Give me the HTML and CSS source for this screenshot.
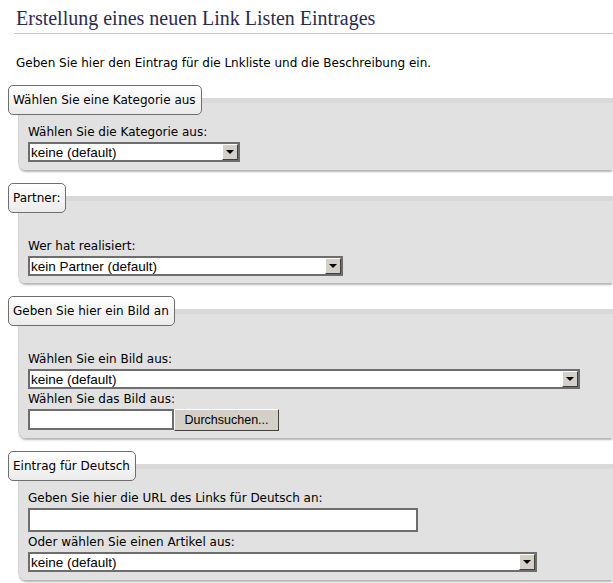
FILE: index.html
```html
<!DOCTYPE html>
<html lang="de">
<head>
    <meta charset="UTF-8">
    <title>Erstellung eines neuen Link Listen Eintrages</title>
    <link rel="stylesheet" href="styles.css">
</head>
<body>
    <div class="page">
        <h1 class="title">Erstellung eines neuen Link Listen Eintrages</h1>
        <p class="intro">Geben Sie hier den Eintrag für die Lnkliste und die Beschreibung ein.</p>

        <div class="group">
            <div class="legend">Wählen Sie eine Kategorie aus</div>
            <div class="panel">
                <label class="field-label">Wählen Sie die Kategorie aus:</label>
                <span class="combo combo-cat">
                    <select><option>keine (default)</option></select>
                    <span class="drop"></span>
                </span>
            </div>
        </div>

        <div class="group">
            <div class="legend">Partner:</div>
            <div class="panel panel-spaced">
                <label class="field-label">Wer hat realisiert:</label>
                <span class="combo combo-partner">
                    <select><option>kein Partner (default)</option></select>
                    <span class="drop"></span>
                </span>
            </div>
        </div>

        <div class="group">
            <div class="legend">Geben Sie hier ein Bild an</div>
            <div class="panel panel-spaced">
                <label class="field-label">Wählen Sie ein Bild aus:</label>
                <span class="combo combo-bild">
                    <select><option>keine (default)</option></select>
                    <span class="drop"></span>
                </span>
                <label class="field-label">Wählen Sie das Bild aus:</label>
                <div class="file-row">
                    <input type="text" class="file-name">
                    <button class="file-btn">Durchsuchen...</button>
                </div>
            </div>
        </div>

        <div class="group">
            <div class="legend">Eintrag für Deutsch</div>
            <div class="panel">
                <label class="field-label">Geben Sie hier die URL des Links für Deutsch an:</label>
                <input type="text" class="url-input">
                <label class="field-label">Oder wählen Sie einen Artikel aus:</label>
                <span class="combo combo-artikel">
                    <select><option>keine (default)</option></select>
                    <span class="drop"></span>
                </span>
            </div>
        </div>
    </div>
</body>
</html>
```

FILE: styles.css
```css
body {
    margin: 0;
    padding: 0;
    background-color: #ffffff;
    font-family: "DejaVu Sans", sans-serif;
    font-size: 12px;
    color: #000000;
}
.page {
    padding-left: 8px;
}
.title {
    margin: 0 0 0 6px;
    padding: 4px 0 1px 2px;
    font-family: "Liberation Serif", serif;
    font-weight: normal;
    font-size: 20px;
    line-height: 28px;
    color: #2b2b50;
    border-bottom: 1px solid #c8c8d2;
}
.intro {
    margin: 20px 0 12px 8px;
    line-height: 19px;
}
.group {
    margin-bottom: 13px;
}
.legend {
    display: inline-block;
    position: relative;
    z-index: 1;
    height: 30px;
    box-sizing: border-box;
    padding: 0 5px 0 4px;
    line-height: 28px;
    border: 1px solid #6e6e6e;
    border-radius: 5px;
    background: linear-gradient(#ffffff, #ebebeb);
    vertical-align: top;
}
.panel {
    margin: -17px 0 0 10px;
    padding: 24px 0 8px 10px;
    background: linear-gradient(#d9d9d9 0, #d9d9d9 5px, #e1e1e1 5px);
    border-left: 1px solid #d4d4d4;
    border-radius: 8px 0 0 8px;
    box-shadow: 0 3px 2px -1px #b5b5b5;
}
.panel-spaced {
    padding-top: 40px;
    padding-bottom: 7px;
}
.field-label {
    display: block;
    line-height: 20px;
    margin-left: -1px;
}
.combo {
    display: flex;
    height: 20px;
    box-sizing: border-box;
    margin-left: -1px;
    border: 2px solid #6d6d6d;
    background-color: #ffffff;
}
.combo select {
    flex: 1;
    min-width: 0;
    height: 100%;
    margin: 0;
    padding: 0 1px;
    border: none;
    outline: none;
    background: #ffffff;
    -webkit-appearance: none;
    appearance: none;
    font-family: "Liberation Sans", Arial, sans-serif;
    font-size: 13.5px;
    color: #000000;
}
.drop {
    display: flex;
    align-items: center;
    justify-content: center;
    width: 16px;
    box-sizing: border-box;
    background-color: #d4d0c8;
    border: 1px solid;
    border-color: #ffffff #404040 #404040 #ffffff;
}
.drop::after {
    content: "";
    border-left: 4px solid transparent;
    border-right: 4px solid transparent;
    border-top: 4px solid #000000;
}
.combo-cat {
    width: 212px;
}
.combo-partner {
    width: 315px;
}
.combo-bild {
    width: 552px;
}
.combo-artikel {
    width: 509px;
}
.file-row {
    display: flex;
    margin-left: -1px;
}
.file-name {
    width: 146px;
    height: 21px;
    box-sizing: border-box;
    margin: 0;
    border: 2px solid #6d6d6d;
    background-color: #ffffff;
}
.file-btn {
    width: 105px;
    height: 22px;
    box-sizing: border-box;
    margin: 0;
    padding: 0;
    background-color: #d4d0c8;
    border: 1px solid;
    border-color: #ffffff #404040 #404040 #ffffff;
    font-family: "Liberation Sans", Arial, sans-serif;
    font-size: 12.5px;
    color: #000000;
}
.url-input {
    display: block;
    width: 390px;
    height: 24px;
    box-sizing: border-box;
    margin: 0 0 0 -1px;
    border: 2px solid #6d6d6d;
    background-color: #ffffff;
}
```
